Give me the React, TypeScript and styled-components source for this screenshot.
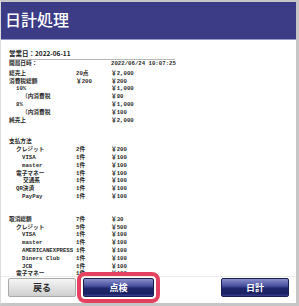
import React from "react";
import styled, { createGlobalStyle } from "styled-components";

const GlobalStyle = createGlobalStyle`
  html, body {
    margin: 0;
    padding: 0;
    background: #ffffff;
  }
  * {
    box-sizing: border-box;
  }
`;

const Frame = styled.div`
  width: 299px;
  height: 306px;
  display: flex;
  flex-direction: column;
  background: #ffffff;
  border-top: 2px solid #c6c6c6;
  border-right: 3px solid #c6c6c6;
  border-bottom: 3px solid #c6c6c6;
  border-left: 1px solid #dcdcdc;
  font-family: "Noto Sans CJK JP", "Noto Sans", sans-serif;
`;

const TitleBar = styled.div`
  height: 38px;
  flex: none;
  background: #3b3b86;
  border-bottom: 1px solid #9a9ac4;
  color: #ffffff;
  font-size: 16px;
  font-weight: 500;
  line-height: 16px;
  padding: 9px 0 0 4px;
`;

const Content = styled.div`
  flex: 1;
  min-height: 0;
  overflow: hidden;
  padding: 0 8px;
`;

const DateHeader = styled.div`
  width: 166px;
  padding: 9px 0 2px;
  border-bottom: 1px solid #b8b8b8;
  font-size: 6.5px;
  line-height: 8px;
  font-weight: 700;
  color: #222;
`;

const Receipt = styled.div`
  font-family: "Liberation Mono", "Noto Sans CJK JP", monospace;
  font-size: 5.7px;
  font-weight: 700;
  color: #2a2a2a;
`;

const Row = styled.div<{ $indent: number; $gap?: number }>`
  display: grid;
  grid-template-columns: 67px 35px auto;
  height: 7.8px;
  line-height: 7.8px;
  white-space: nowrap;
  margin-bottom: ${(p) => p.$gap ?? 0}px;

  & > span:first-child {
    padding-left: ${(p) => p.$indent}px;
  }
`;

const Spacer = styled.div<{ $h: number }>`
  height: ${(p) => p.$h}px;
`;

const Footer = styled.div`
  flex: none;
  height: 27px;
  border-top: 1px solid #ececec;
  display: flex;
  align-items: flex-start;
  gap: 7px;
  padding: 1px 7px 0 7px;
`;

const Button = styled.button<{ $variant: "gray" | "blue"; $focus?: boolean; $push?: boolean }>`
  height: 19px;
  width: ${(p) => (p.$focus ? 71 : 68)}px;
  margin-left: ${(p) => (p.$push ? "auto" : "0")};
  padding: 0;
  display: flex;
  align-items: center;
  justify-content: center;
  border-radius: 2px;
  font-family: "Noto Sans CJK JP", "Noto Sans", sans-serif;
  font-size: 9px;
  font-weight: 700;
  line-height: 1;
  cursor: pointer;
  color: ${(p) => (p.$variant === "gray" ? "#2c2c2c" : "#ffffff")};
  border: 1px solid ${(p) => (p.$variant === "gray" ? "#a9a9a9" : "#1a1d52")};
  background: ${(p) =>
    p.$variant === "gray"
      ? "linear-gradient(#f6f6f6 0%, #e2e2e2 50%, #cfcfcf 100%)"
      : "linear-gradient(#8a8fcb 0%, #4a519e 40%, #20266c 55%, #1b2062 85%, #3a4090 100%)"};
  outline: ${(p) => (p.$focus ? "4px solid #e5405f" : "none")};
  outline-offset: 2px;
`;

type Line =
  | { kind: "row"; label: string; indent: number; count?: string; amount?: string; gap?: number }
  | { kind: "space"; h: number };

const lines: Line[] = [
  { kind: "row", label: "開局日時：", indent: 0, amount: "2022/06/24 10:07:25", gap: 2 },
  { kind: "row", label: "総売上", indent: 0, count: "20点", amount: "￥2,000" },
  { kind: "row", label: "消費税総額", indent: 0, count: "￥200", amount: "￥200" },
  { kind: "row", label: "10%", indent: 7, amount: "￥1,000" },
  { kind: "row", label: "（内消費税", indent: 13, amount: "￥80" },
  { kind: "row", label: "8%", indent: 7, amount: "￥1,000" },
  { kind: "row", label: "（内消費税", indent: 13, amount: "￥100" },
  { kind: "row", label: "純売上", indent: 0, amount: "￥2,000" },
  { kind: "space", h: 14 },
  { kind: "row", label: "支払方法", indent: 0 },
  { kind: "row", label: "クレジット", indent: 7, count: "2件", amount: "￥200" },
  { kind: "row", label: "VISA", indent: 13, count: "1件", amount: "￥100" },
  { kind: "row", label: "master", indent: 13, count: "1件", amount: "￥100" },
  { kind: "row", label: "電子マネー", indent: 7, count: "1件", amount: "￥100" },
  { kind: "row", label: "交通系", indent: 14, count: "1件", amount: "￥100" },
  { kind: "row", label: "QR決済", indent: 7, count: "1件", amount: "￥100" },
  { kind: "row", label: "PayPay", indent: 13, count: "1件", amount: "￥100" },
  { kind: "space", h: 15 },
  { kind: "row", label: "取消総額", indent: 0, count: "7件", amount: "￥30" },
  { kind: "row", label: "クレジット", indent: 7, count: "5件", amount: "￥500" },
  { kind: "row", label: "VISA", indent: 13, count: "1件", amount: "￥100" },
  { kind: "row", label: "master", indent: 13, count: "1件", amount: "￥100" },
  { kind: "row", label: "AMERICANEXPRESS", indent: 13, count: "1件", amount: "￥100" },
  { kind: "row", label: "Diners Club", indent: 13, count: "1件", amount: "￥100" },
  { kind: "row", label: "JCB", indent: 13, count: "1件", amount: "￥100" },
  { kind: "row", label: "電子マネー", indent: 7, count: "1件", amount: "￥100" },
];

const App = () => {
  return (
    <>
      <GlobalStyle />
      <Frame>
        <TitleBar>日計処理</TitleBar>
        <Content>
          <DateHeader>営業日：2022-06-11</DateHeader>
          <Receipt>
            {lines.map((line, i) =>
              line.kind === "space" ? (
                <Spacer key={i} $h={line.h} />
              ) : (
                <Row key={i} $indent={line.indent} $gap={line.gap}>
                  <span>{line.label}</span>
                  <span>{line.count ?? ""}</span>
                  <span>{line.amount ?? ""}</span>
                </Row>
              )
            )}
          </Receipt>
        </Content>
        <Footer>
          <Button $variant="gray">戻る</Button>
          <Button $variant="blue" $focus>
            点検
          </Button>
          <Button $variant="blue" $push>
            日計
          </Button>
        </Footer>
      </Frame>
    </>
  );
};

export default App;
